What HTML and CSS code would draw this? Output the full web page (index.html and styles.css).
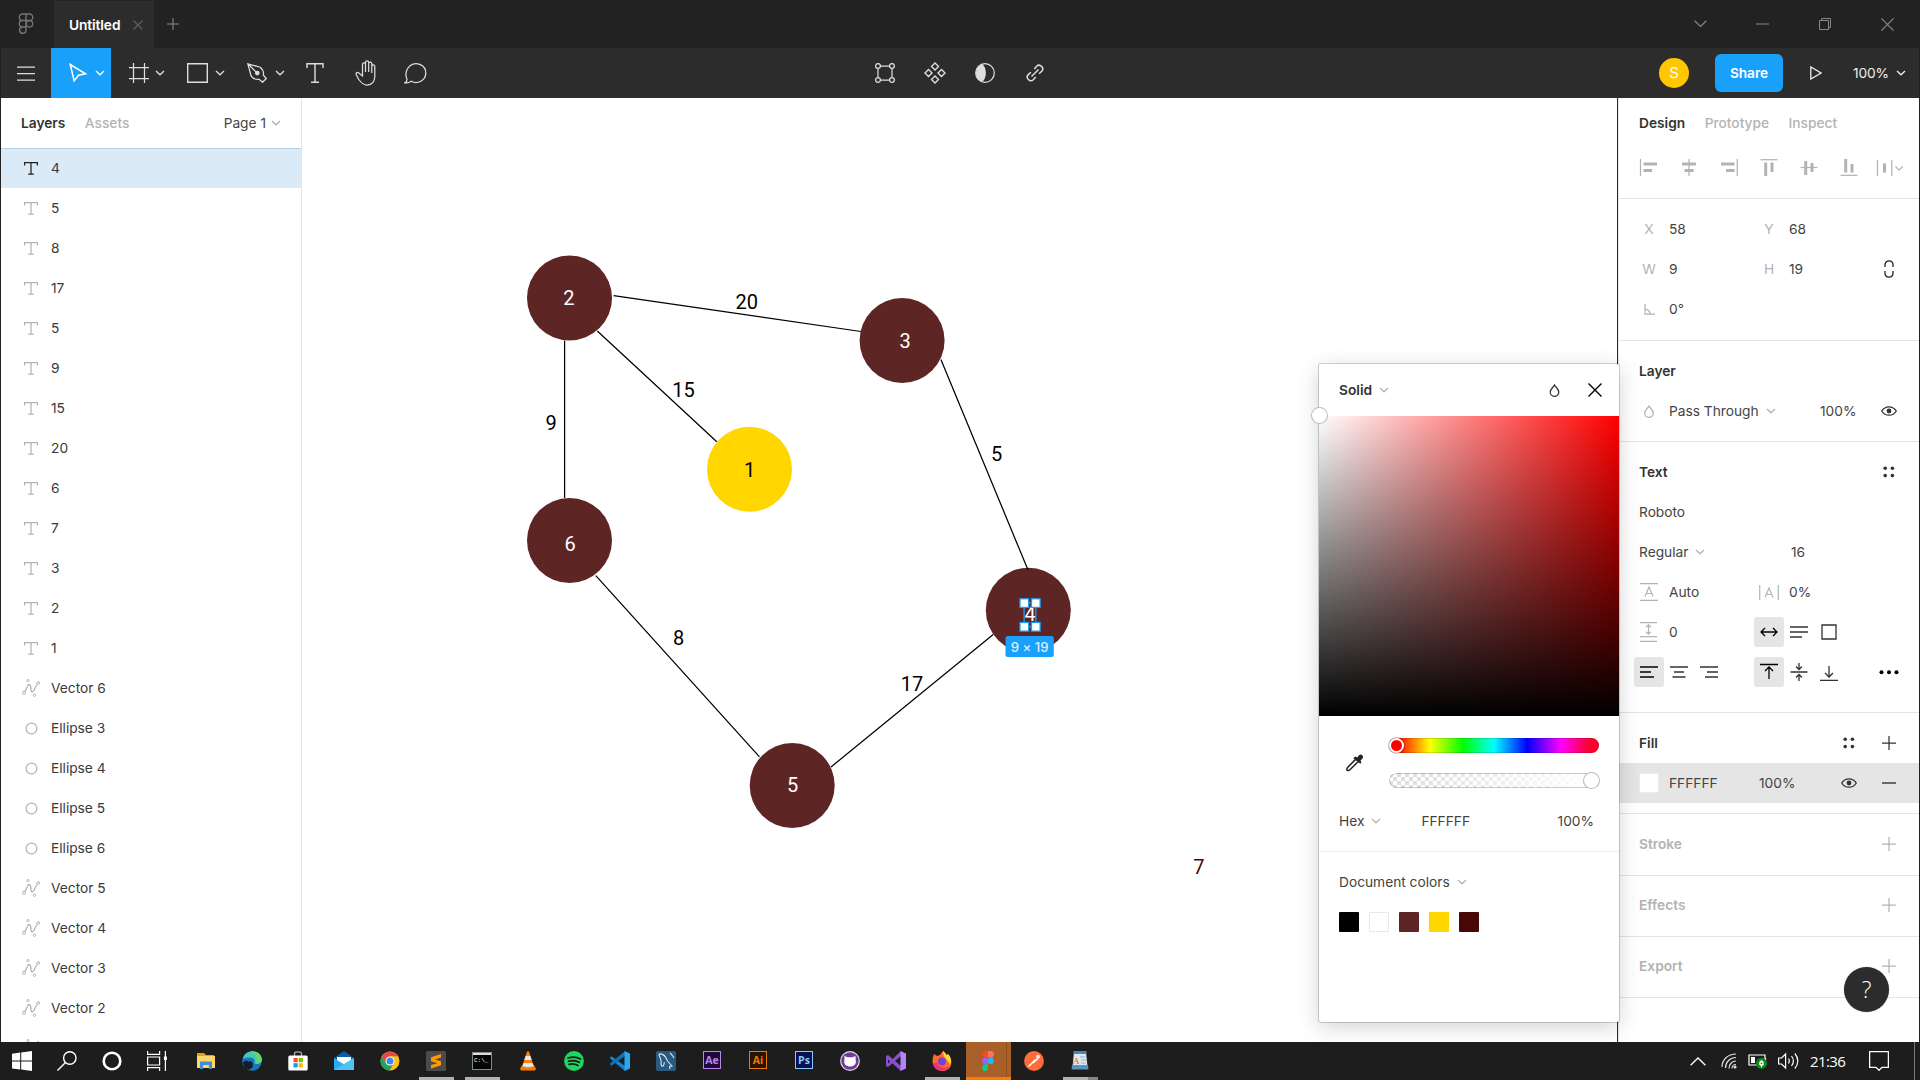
FILE: index.html
```html
<!DOCTYPE html>
<html lang="en">
<head>
<meta charset="utf-8">
<title>Untitled</title>
<link rel="stylesheet" href="styles.css">
</head>
<body>
<svg class="defs" width="0" height="0">
  <symbol id="chev" viewBox="0 0 10 6"><path d="M1 1l4 3.8L9 1" fill="none" stroke="currentColor" stroke-width="1.3"/></symbol>
  <symbol id="plus" viewBox="0 0 14 14"><path d="M7 0v14M0 7h14" stroke="currentColor" stroke-width="1.25"/></symbol>
  <symbol id="dots" viewBox="0 0 12 12"><g fill="currentColor"><circle cx="2.2" cy="2.2" r="1.8"/><circle cx="9.4" cy="2.2" r="1.8"/><circle cx="2.2" cy="9.6" r="1.8"/><circle cx="9.4" cy="9.6" r="1.8"/></g></symbol>
  <symbol id="eye" viewBox="0 0 16 10"><path d="M.7 5C4.2-.6 11.8-.6 15.3 5 11.800 10.600 4.200 10.600.7 5z" fill="none" stroke="currentColor" stroke-width="1.3"/><circle cx="8" cy="5" r="2.4" fill="currentColor"/></symbol>
  <symbol id="drop" viewBox="0 0 10 13"><path d="M5 .9C6.200 3.400 9.300 5 9.300 8.100a4.300 4.300 0 0 1-8.600 0C.7 5 3.800 3.400 5 .9z" fill="none" stroke="currentColor" stroke-width="1.25"/></symbol>
  <symbol id="type" viewBox="0 0 14 13"><path d="M.6 3.400V.7h12.800v2.700M7 .7v11.500M4.200 12.200h5.600" fill="none" stroke="currentColor" stroke-width="1.25"/></symbol>
  <symbol id="oval" viewBox="0 0 13 13"><circle cx="6.500" cy="6.500" r="5.400" fill="none" stroke="currentColor" stroke-width="1.25"/></symbol>
  <symbol id="vector" viewBox="0 0 18 18"><g fill="none" stroke="currentColor" stroke-width="1"><path d="M2.800 12.600C5.500 9 5.500 4.600 7.700 5.600S8 12.800 10 13s3.300-5.600 5-7.400" stroke-width="1.300"/><circle cx="5.800" cy="1.600" r="1.100"/><circle cx="2" cy="13.800" r="1.500"/><circle cx="12.400" cy="16.200" r="1.200"/><circle cx="16.200" cy="4" r="1.400"/></g></symbol>
</svg>

<header class="titlebar">
  <div class="home"><svg width="16" height="22" viewBox="0 0 16 22" fill="none" stroke="#777" stroke-width="1.300"><path d="M8 1H4.500a3.200 3.200 0 0 0 0 6.500H8zM8 1h3.500a3.200 3.200 0 0 1 0 6.500H8zM8 7.500H4.500a3.200 3.200 0 0 0 0 6.500H8zM8 14H4.500A3.200 3.200 0 1 0 8 17.200z"/><circle cx="11.500" cy="10.800" r="3.200"/></svg></div>
  <div class="tab"><span>Untitled</span><svg width="10" height="10" viewBox="0 0 10 10"><path d="M.5.5l9 9M9.500.5l-9 9" stroke="#5c5c5c" stroke-width="1.400"/></svg></div>
  <svg class="newtab" width="12" height="12"><use href="#plus"/></svg>
  <div class="winctl">
    <div><svg width="13" height="8" viewBox="0 0 13 8"><path d="M.6.8l5.900 5.700L12.400.8" fill="none" stroke="#888" stroke-width="1.200"/></svg></div>
    <div><svg width="13" height="2"><path d="M0 1h13" stroke="#888"/></svg></div>
    <div><svg width="12" height="12" viewBox="0 0 12 12" fill="none" stroke="#888"><path d="M.5 2.500h9v9h-9zM2.500 2.500v-2h9v9h-2"/></svg></div>
    <div><svg width="13" height="13" viewBox="0 0 13 13"><path d="M.4.4l12.200 12.200M12.600.4L.4 12.600" stroke="#888" stroke-width="1.200"/></svg></div>
  </div>
</header>

<nav class="toolbar">
  <div class="tools">
    <div class="tool menu"><svg width="18" height="15" viewBox="0 0 18 15"><path d="M0 1h18M0 7.500h18M0 14h18" stroke="currentColor" stroke-width="1.250"/></svg></div>
    <div class="tool wide active"><svg width="18" height="20" viewBox="0 0 18 20"><path d="M1.200 1.500l15.300 9.300-7 1.500-4.300 5.500z" fill="none" stroke="currentColor" stroke-width="1.500"/></svg><svg class="c" width="10" height="6"><use href="#chev"/></svg></div>
    <div class="tool wide frame"><svg width="20" height="20" viewBox="0 0 20 20"><path d="M4.500 0v20M15.500 0v20M0 4.500h20M0 15.500h20" stroke="currentColor" stroke-width="1.250"/></svg><svg class="c" width="10" height="6"><use href="#chev"/></svg></div>
    <div class="tool wide shape"><svg width="21" height="20" viewBox="0 0 21 20"><path d="M.7.7h19.600v18.600H.7z" fill="none" stroke="currentColor" stroke-width="1.400"/></svg><svg class="c" width="10" height="6"><use href="#chev"/></svg></div>
    <div class="tool wide shape"><svg width="20" height="20" viewBox="0 0 20 20" fill="none" stroke="currentColor" stroke-width="1.250"><path d="M.8.8l12.400 3.400c2 1.600 3.600 5 3.200 8l2.900 3.300-3.800 3.800-3.300-2.900c-3.600.2-6.600-1-8-3.200zM.8.8l8.600 8.600"/><circle cx="10.300" cy="10.100" r="1.700" fill="currentColor"/></svg><svg class="c" width="10" height="6"><use href="#chev"/></svg></div>
    <div class="tool single"><svg width="18" height="20" viewBox="0 0 18 20"><path d="M1 5V.8h16V5M9 .8v18.400M5 19.200h8" fill="none" stroke="currentColor" stroke-width="1.400"/></svg></div>
    <div class="tool single"><svg width="24" height="26" viewBox="0 0 24 26"><path d="M7.500 14V4.600c0-2.200 3-2.200 3 0V12 2.500c0-2.200 3.200-2.200 3.200 0V12 3.500c0-2 3.100-2 3.100 0V13 6.300c0-2 3-2 3 0V16.500c0 5-3 8.500-7.500 8.500-4 0-6-2-8.500-5.500L1.400 15c-1.300-2 .9-3.200 2.400-2l3.700 3z" transform="translate(2 0)" fill="none" stroke="currentColor" stroke-width="1.250"/></svg></div>
    <div class="tool single"><svg width="23" height="22" viewBox="0 0 23 22"><path d="M.8 20.800c1.500-.8 2.300-2.300 2.200-3.700C.8 12.400 2.200 6.800 6 3.700 12.300-1 21.800 3 21.800 11c0 7.500-8.500 11.800-14.500 8.300-1.700 1.200-4 1.900-6.500 1.500z" fill="none" stroke="currentColor" stroke-width="1.250"/></svg></div>
  </div>
  <div class="mid">
    <div class="tool"><svg width="20" height="20" viewBox="0 0 20 20" fill="none" stroke="currentColor" stroke-width="1.250"><circle cx="3" cy="3" r="2.400"/><circle cx="17" cy="3" r="2.400"/><circle cx="3" cy="17" r="2.400"/><circle cx="17" cy="17" r="2.400"/><path d="M5.400 3h9.200M5.400 17h9.200M3 5.400v9.200M17 5.400v9.200"/></svg></div>
    <div class="tool"><svg width="22" height="22" viewBox="0 0 22 22" fill="none" stroke="currentColor" stroke-width="1.400"><path d="M11 1l3.500 3.500L11 8 7.500 4.500zM11 14l3.500 3.500L11 21l-3.500-3.500zM4.500 7.500L8 11l-3.500 3.500L1 11zM17.500 7.500L21 11l-3.500 3.500L14 11z"/></svg></div>
    <div class="tool"><svg width="20" height="20" viewBox="0 0 20 20"><circle cx="10" cy="10" r="9.300" fill="none" stroke="currentColor" stroke-width="1.250"/><path d="M7.500 1.200a9.200 9.200 0 0 0 0 17.600c4.500-4 4.500-13.600 0-17.600z" fill="currentColor"/></svg></div>
    <div class="tool"><svg width="18" height="18" viewBox="0 0 18 18" fill="none" stroke="currentColor" stroke-width="1.500"><path d="M5.500 12.500l7-7M8.300 4.900l2.300-2.600c3.200-3.200 8.200 1.700 5.100 5l-2.600 2.400M4.900 8.300L2.300 10.600c-3.200 3.200 1.700 8.200 5 5.100l2.400-2.600"/></svg></div>
  </div>
  <div class="actions">
    <div class="avatar">S</div>
    <div class="share">Share</div>
    <svg class="play" width="12" height="14" viewBox="0 0 12 14"><path d="M.8 1v12l10.200-6z" fill="none" stroke="currentColor" stroke-width="1.300"/></svg>
    <span class="zoom">100%</span>
    <svg width="10" height="6"><use href="#chev"/></svg>
  </div>
</nav>

<main class="workspace">
  <aside class="layers">
    <div class="lhead"><b>Layers</b><span class="dim">Assets</span><span class="page">Page 1 <svg width="10" height="6"><use href="#chev"/></svg></span></div>
    <ul>
      <li class="sel"><svg width="14" height="13"><use href="#type"/></svg>4</li>
      <li><svg width="14" height="13"><use href="#type"/></svg>5</li>
      <li><svg width="14" height="13"><use href="#type"/></svg>8</li>
      <li><svg width="14" height="13"><use href="#type"/></svg>17</li>
      <li><svg width="14" height="13"><use href="#type"/></svg>5</li>
      <li><svg width="14" height="13"><use href="#type"/></svg>9</li>
      <li><svg width="14" height="13"><use href="#type"/></svg>15</li>
      <li><svg width="14" height="13"><use href="#type"/></svg>20</li>
      <li><svg width="14" height="13"><use href="#type"/></svg>6</li>
      <li><svg width="14" height="13"><use href="#type"/></svg>7</li>
      <li><svg width="14" height="13"><use href="#type"/></svg>3</li>
      <li><svg width="14" height="13"><use href="#type"/></svg>2</li>
      <li><svg width="14" height="13"><use href="#type"/></svg>1</li>
      <li><svg width="18" height="18"><use href="#vector"/></svg>Vector 6</li>
      <li><svg width="13" height="13"><use href="#oval"/></svg>Ellipse 3</li>
      <li><svg width="13" height="13"><use href="#oval"/></svg>Ellipse 4</li>
      <li><svg width="13" height="13"><use href="#oval"/></svg>Ellipse 5</li>
      <li><svg width="13" height="13"><use href="#oval"/></svg>Ellipse 6</li>
      <li><svg width="18" height="18"><use href="#vector"/></svg>Vector 5</li>
      <li><svg width="18" height="18"><use href="#vector"/></svg>Vector 4</li>
      <li><svg width="18" height="18"><use href="#vector"/></svg>Vector 3</li>
      <li><svg width="18" height="18"><use href="#vector"/></svg>Vector 2</li>
      <li><svg width="18" height="18"><use href="#vector"/></svg></li>
    </ul>
  </aside>

  <section class="canvas">
    <svg width="1315" height="944" viewBox="302 98 1315 944">
      <g fill="#5e2525">
        <circle cx="569.500" cy="298" r="42.500"/><circle cx="902.100" cy="340.500" r="42.500"/>
        <circle cx="569.500" cy="540.400" r="42.500"/><circle cx="1028.300" cy="610.300" r="42.500"/>
        <circle cx="792.200" cy="785.500" r="42.500"/><circle cx="749.500" cy="469.300" r="42.500" fill="#ffd600"/>
      </g>
      <path d="M613.600 295.700L861 331.500M597.300 331L716.800 441.700M564.600 340.600V498M940.900 359.400L1028 570M595.800 575.600L759.500 756.800M993.200 634.500L831 767" fill="none" stroke="#000" stroke-width="1.250"/>
      <g class="lbl">
        <text x="746.700" y="308.600">20</text><text x="683.500" y="396.600">15</text><text x="551" y="429.600">9</text>
        <text x="996.600" y="460.600">5</text><text x="678.700" y="644.600">8</text><text x="912" y="690.600">17</text>
        <text x="749.500" y="476.600">1</text><text x="1198.800" y="874">7</text>
      </g>
      <g class="lbl" fill="#fff">
        <text x="568.800" y="304.800">2</text><text x="905" y="348.200">3</text><text x="570" y="550.600">6</text>
        <text x="792.600" y="791.800">5</text><text x="1030" y="620.500">4</text>
      </g>
      <g fill="none" stroke="#18a0fb" stroke-width="1.250">
        <rect x="1024.100" y="602.800" width="11.800" height="24"/>
        <g fill="#fff"><rect x="1020" y="598.800" width="8.600" height="8.600"/><rect x="1031.500" y="598.800" width="8.600" height="8.600"/><rect x="1020" y="622.500" width="8.600" height="8.600"/><rect x="1031.500" y="622.500" width="8.600" height="8.600"/></g>
      </g>
      <rect x="1005.500" y="636" width="48.300" height="21" rx="2.500" fill="#18a0fb"/>
      <text class="dims" x="1029.700" y="651.500">9 × 19</text>
    </svg>
  </section>

  <aside class="props">
    <div class="sec top">
      <div class="tabs"><b>Design</b><span>Prototype</span><span>Inspect</span></div>
      <div class="aligns">
        <svg width="18" height="17" viewBox="0 0 18 17"><path d="M1.500 0v17" stroke-width="1.250"/><path d="M4.500 5H18M4.500 11.500h8.500" stroke-width="3"/></svg>
        <svg width="18" height="17" viewBox="0 0 18 17"><path d="M10 0v17" stroke-width="1.250"/><path d="M3 5h14M5.500 11.500h9" stroke-width="3"/></svg>
        <svg width="19" height="17" viewBox="0 0 19 17"><path d="M18.300 0v17" stroke-width="1.250"/><path d="M2 5h13.500M7 11.500h8.500" stroke-width="3"/></svg>
        <svg width="18" height="17" viewBox="0 0 18 17"><path d="M.5.7h17" stroke-width="1.250"/><path d="M5.700 3.500v13.500M12 3.500v9.500" stroke-width="3"/></svg>
        <svg width="18" height="17" viewBox="0 0 18 17"><path d="M.5 8.500h17" stroke-width="1.250"/><path d="M5.700 2v14M12 4v9" stroke-width="3"/></svg>
        <svg width="18" height="17" viewBox="0 0 18 17"><path d="M.5 16.300h17" stroke-width="1.250"/><path d="M5.700 0v13.500M12 5v8.500" stroke-width="3"/></svg>
        <svg class="dist" width="28" height="17" viewBox="0 0 28 17"><path d="M1.500 1v16M15.800 1v16M19.500 7.500l3.600 3.600 3.600-3.600" fill="none" stroke-width="1.250"/><path d="M8.500 4.500v9" stroke-width="3"/></svg>
      </div>
    </div>
    <div class="sec geo">
      <div class="row"><i>X</i><span>58</span><i>Y</i><span>68</span></div>
      <div class="row"><i>W</i><span>9</span><i>H</i><span>19</span><em><svg width="10" height="18" viewBox="0 0 10 18"><path d="M1 7V5c0-5.500 8-5.500 8 0v2M1 11v2c0 5.500 8 5.500 8 0v-2" fill="none" stroke="#222" stroke-width="1.300"/></svg></em></div>
      <div class="row"><i><svg width="11" height="11" viewBox="0 0 11 11"><path d="M1 0v10h10M1 5a5 5 0 0 1 5 5" fill="none" stroke="currentColor" stroke-width="1.250"/></svg></i><span>0°</span></div>
    </div>
    <div class="sec">
      <div class="row title"><b>Layer</b></div>
      <div class="row blend"><i><svg width="10" height="13"><use href="#drop"/></svg></i><span>Pass Through <svg width="10" height="6"><use href="#chev"/></svg></span><span>100%</span><em><svg width="16" height="10"><use href="#eye"/></svg></em></div>
    </div>
    <div class="sec text">
      <div class="row title"><b>Text</b><em><svg width="12" height="12"><use href="#dots"/></svg></em></div>
      <div class="row title"><span>Roboto</span></div>
      <div class="row style"><span>Regular <svg width="10" height="6"><use href="#chev"/></svg></span><span>16</span></div>
      <div class="row"><i><svg width="18" height="18" viewBox="0 0 18 18"><path d="M0 .7h18M0 17.300h18M5 13.500L9 4l4 9.500M6.300 10.500h5.400" fill="none" stroke="currentColor" stroke-width="1.200"/></svg></i><span>Auto</span><i><svg width="20" height="15" viewBox="0 0 20 15"><path d="M.7 0v15M19.300 0v15M6 12.500L10 3l4 9.500M7.300 9.500h5.400" fill="none" stroke="currentColor" stroke-width="1.200"/></svg></i><span>0%</span></div>
      <div class="row btns"><i><svg width="18" height="20" viewBox="0 0 18 20"><path d="M0 .7h17M0 14.700h17M0 19.300h17M8.500 3v9M6 5.200l2.500-2.400L11 5.200M6 9.800l2.500 2.400L11 9.800" fill="none" stroke="currentColor" stroke-width="1.200"/></svg></i><span>0</span>
        <div class="set"><u class="on"><svg width="18" height="10" viewBox="0 0 18 10"><path d="M1 5h16M5 1L1 5l4 4M13 1l4 4-4 4"/></svg></u><u><svg width="18" height="12" viewBox="0 0 18 12"><path d="M0 1h18M0 6h18M0 11h12"/></svg></u><u><svg width="16" height="16" viewBox="0 0 16 16"><path d="M1 1h14v14H1z"/></svg></u></div></div>
      <div class="row btns"><div class="set"><u class="on"><svg width="18" height="12" viewBox="0 0 18 12"><path d="M0 1h18M0 6h11M0 11h14"/></svg></u><u><svg width="18" height="12" viewBox="0 0 18 12"><path d="M0 1h18M4 6h10M2.500 11h13"/></svg></u><u><svg width="18" height="12" viewBox="0 0 18 12"><path d="M0 1h18M7 6h11M5 11h13"/></svg></u></div>
        <div class="set"><u class="on"><svg width="18" height="18" viewBox="0 0 18 18"><path d="M0 1.500h18M9 16V4.500M5 8l4-4 4 4"/></svg></u><u><svg width="18" height="18" viewBox="0 0 18 18"><path d="M.5 9h17M9 0v6M6 3.500l3 3 3-3M9 18v-6M6 14.500l3-3 3 3"/></svg></u><u><svg width="18" height="18" viewBox="0 0 18 18"><path d="M0 17.300h18M9 3v11M5 10l4 4 4-4"/></svg></u></div>
        <em><svg width="20" height="5" viewBox="0 0 20 5"><circle cx="2.500" cy="2.300" r="2"/><circle cx="10" cy="2.300" r="2"/><circle cx="17.500" cy="2.300" r="2"/></svg></em></div>
    </div>
    <div class="sec fill">
      <div class="row title"><b>Fill</b><em><svg width="12" height="12"><use href="#dots"/></svg></em><em><svg width="14" height="14"><use href="#plus"/></svg></em></div>
      <div class="row paint"><i><s></s></i><span>FFFFFF</span><span>100%</span><em><svg width="16" height="10"><use href="#eye"/></svg></em><em><svg width="14" height="2"><path d="M0 1h14" stroke="#333" stroke-width="1.400"/></svg></em></div>
    </div>
    <div class="sec off stroke"><div class="row title"><b>Stroke</b><em><svg width="14" height="14"><use href="#plus"/></svg></em></div></div>
    <div class="sec off"><div class="row title"><b>Effects</b><em><svg width="14" height="14"><use href="#plus"/></svg></em></div></div>
    <div class="sec off"><div class="row title"><b>Export</b><em><svg width="14" height="14"><use href="#plus"/></svg></em></div></div>
  </aside>
</main>

<section class="picker">
  <div class="phead"><b>Solid</b><svg class="gray" width="10" height="6"><use href="#chev"/></svg><svg class="pdrop" width="11" height="13"><use href="#drop"/></svg><svg width="14" height="14" viewBox="0 0 14 14"><path d="M.5.5l13 13M13.500.5l-13 13" stroke="#000" stroke-width="1.400"/></svg></div>
  <div class="sv"><div class="knob"></div></div>
  <div class="sliders">
    <svg width="18" height="18" viewBox="0 0 18 18"><path d="M9.600 5.400L2 13c-1.200 1.200-1.300 2-1 3.200 1 .7 2.200.3 3.200-.7l7.800-7.800" fill="none" stroke="#222" stroke-width="1.500"/><path d="M8 3.600l1.600-1 1.600 1 1.600-2.100c2-2.600 5.800 1 3.500 3.300L14.500 6.600l1 1.800-1.300 1.300-6.900-5.400z" fill="#222"/></svg>
    <div class="bars"><div class="hue"><div class="ring"></div></div><div class="alpha"><div class="dot"></div></div></div>
  </div>
  <div class="hex"><span>Hex</span><svg class="gray" width="10" height="6"><use href="#chev"/></svg><span class="val">FFFFFF</span><span>100%</span></div>
  <div class="doc"><div class="doch"><span>Document colors</span><svg class="gray" width="10" height="6"><use href="#chev"/></svg></div>
    <div class="swatches"><div class="k"></div><div class="w"></div><div class="m"></div><div class="y"></div><div class="d"></div></div></div>
</section>
<div class="help">?</div>

<footer class="taskbar">
  <div class="sys"><svg width="20" height="20" viewBox="0 0 20 20"><path d="M0 2.800l8.200-1.200v8H0zM9.200 1.500L20 0v9.600H9.200zM0 10.500h8.200v8L0 17.400zM9.200 10.500H20V20L9.200 18.500z" fill="#fff"/></svg></div>
  <div class="sys"><svg width="20" height="20" viewBox="0 0 20 20" fill="none" stroke="#fff" stroke-width="1.400"><circle cx="12.800" cy="7" r="6.200"/><path d="M8.500 11.500L.5 19.500"/></svg></div>
  <div class="sys"><svg width="20" height="20" viewBox="0 0 20 20"><circle cx="10" cy="10" r="8.300" fill="none" stroke="#fff" stroke-width="2.600"/></svg></div>
  <div class="sys last"><svg width="20" height="20" viewBox="0 0 20 20" fill="none" stroke="#fff" stroke-width="1.200"><path d="M.6 0v3.400h12V0M.6 20v-3.400h12V20M.6 6h12v8H.6zM18.400 0v20"/><path d="M18.400 5.500v3.500" stroke-width="3"/></svg></div>
  <div class="app"><svg width="20" height="20" viewBox="0 0 20 20"><path d="M1 2h7l2 2h8v3H1z" fill="#e0a21a"/><path d="M1 5h18v12H1z" fill="#ffd667"/><path d="M4 18v-7.500h12V18h-3v-4H7v4z" fill="#3f8fd6"/></svg></div>
  <div class="app"><svg width="20" height="20" viewBox="0 0 20 20"><circle cx="10" cy="10" r="9.800" fill="#1576c4"/><path d="M1 8C2 2 7 0 11 .2c6 .2 9.500 5.300 8.600 9.500-.7 3.300-5 4-7.400 2.500C14 9 11 6.500 7.500 6.500 4.500 6.500 2 7 1 8z" fill="#45c8b1"/><path d="M12 .4c5 1 8.300 4.600 7.700 9-.6 3-4.500 3.800-6.500 2.800C16 9 15 3 9 .5z" fill="#65d76c"/><path d="M.8 11.500L4 9.500l2.500 1L9 10l2 2.500-.5 4L7 18.700 3 17.500z" fill="#171d25"/></svg></div>
  <div class="app"><svg width="20" height="20" viewBox="0 0 20 20"><path d="M6.500 5V2.500c0-2.300 7-2.300 7 0V5" fill="none" stroke="#aaa" stroke-width="1.300"/><rect x=".3" y="4.500" width="19.400" height="15" rx="1.500" fill="#fff"/><path d="M5.500 7h4.200v4.200H5.500z" fill="#f25022"/><path d="M10.700 7h4.200v4.200h-4.200z" fill="#7fba00"/><path d="M5.500 12.200h4.200v4.200H5.500z" fill="#00a4ef"/><path d="M10.700 12.200h4.200v4.200h-4.200z" fill="#ffb900"/></svg></div>
  <div class="app"><svg width="20" height="20" viewBox="0 0 20 20"><path d="M0 7l10-7 10 7v4H0z" fill="#0d5cab"/><path d="M3 6h14v6l-7 3-7-3z" fill="#fff"/><path d="M0 7l10 6.500L20 7v12H0z" fill="#2aa9ee"/><path d="M0 19L20 7v12z" fill="#4cc4f8"/></svg></div>
  <div class="app"><svg width="20" height="20" viewBox="0 0 20 20"><circle cx="10" cy="10" r="9.500" fill="#fbc116"/><path d="M1.700 5.300A9.500 9.500 0 0 1 18.300 5.300H10L6 12.400z" fill="#e04a3f"/><path d="M1.700 5.300A9.500 9.500 0 0 0 9.500 19.500l4.400-7.200L6 12.400z" fill="#1ea362"/><circle cx="10" cy="10" r="4.500" fill="#fff"/><circle cx="10" cy="10" r="3.500" fill="#4285f4"/></svg></div>
  <div class="app run"><svg width="20" height="20" viewBox="0 0 20 20"><rect width="20" height="20" rx="1.500" fill="#4b4b4b"/><path d="M15 3L5 6.200v4l6.500 2L5 14v3.500l10-3.200v-4L8.700 8.500 15 6.600z" fill="#ff9800"/></svg></div>
  <div class="app run"><svg width="20" height="18" viewBox="0 0 20 18"><rect x=".5" y=".5" width="19" height="17" fill="#050505" stroke="#888"/><path d="M1 1h18v2H1z" fill="#ddd"/><text x="2" y="10" class="cmd">C:\_</text></svg></div>
  <div class="app"><svg width="20" height="20" viewBox="0 0 20 20"><path d="M4 14h12l2 4-1 1.500H3L2 18z" fill="#f57c00"/><path d="M9 .5h2L16 16c-3 2-9 2-12 0z" fill="#f58212"/><path d="M7.600 5h4.800l1.300 4H6.300zM5.400 12h9.200l1 3c-3 1.500-8 1.500-11 0z" fill="#e8e8e8"/></svg></div>
  <div class="app"><svg width="20" height="20" viewBox="0 0 20 20"><circle cx="10" cy="10" r="9.900" fill="#1ed760"/><path d="M4 7c4-1.300 9-1 12.500 1M4.500 10.300c3.500-1 7.500-.7 10.800 1M5 13.400c3-.8 6-.5 9 1" fill="none" stroke="#151515" stroke-width="1.700" stroke-linecap="round"/></svg></div>
  <div class="app"><svg width="20" height="20" viewBox="0 0 20 20"><path d="M0 6.500l1.500-1.300L15 15v5L0 7.500z" fill="#1482cc"/><path d="M0 13.500l1.500 1.300L15 5V0L0 12.500z" fill="#0d70b8"/><path d="M14.500 0L20 2.500v15L14.500 20z" fill="#2ba5f2"/></svg></div>
  <div class="app"><svg width="20" height="20" viewBox="0 0 20 20"><rect width="20" height="20" rx="2" fill="#285a82"/><path d="M3 3c5-1 7 3 8.500 7l4.500 5-2.500.3L14 18M3 3c0 3 2 4 2 7s0 6 2 5 0-4 2-3M14 2l2 2 2 3" fill="none" stroke="#d8e8f0" stroke-width="1.100"/></svg></div>
  <div class="app"><div class="adobe ae">Ae</div></div>
  <div class="app"><div class="adobe ai">Ai</div></div>
  <div class="app"><div class="adobe ps">Ps</div></div>
  <div class="app"><svg width="20" height="20" viewBox="0 0 20 20"><circle cx="10" cy="10" r="9.300" fill="#74379b" stroke="#ddd" stroke-width="1.200"/><path d="M4.500 5l3 1.200h5l3-1.200.2 4c1 4-1.500 6.500-5.700 6.500S3.500 13 4.400 9z" fill="#fff"/></svg></div>
  <div class="app"><svg width="20" height="20" viewBox="0 0 20 20"><path d="M0 5l2-1L15 15v5L2 8.500v4L15 0v5L2 16l-2-1z" fill="#8a4fd0"/><path d="M14.500 0L20 2.500v15L14.500 20z" fill="#b583f4"/></svg></div>
  <div class="app run"><svg width="20" height="20" viewBox="0 0 20 20"><path d="M2 3l3 2 3-1 3-4c3 2 3 4 4 4l1-1c3 3 4 7 3 11-1 4-5 6-9 6-5 0-9-4-9.500-9C.5 8 1 5 2 3z" fill="#ff6a2b"/><path d="M11 0c3 2 3 4 4 4l1-1c3 3 4 7 2 11-2-6-7-6-7-14z" fill="#ffd83a"/><path d="M1 13c2 8 13 9 17 2-5 3-12 2-13-4z" fill="#f0307a"/><circle cx="10" cy="10.500" r="4" fill="#7a40d0"/></svg></div>
  <div class="app current"><svg width="12" height="20" viewBox="0 0 14 20" preserveAspectRatio="none"><path d="M7 0H3.500a3.300 3.300 0 0 0 0 6.600H7z" fill="#f24e1e"/><path d="M7 0h3.500a3.300 3.300 0 0 1 0 6.600H7z" fill="#ff7262"/><path d="M7 6.600H3.500a3.300 3.300 0 0 0 0 6.600H7z" fill="#a259ff"/><circle cx="10.300" cy="9.900" r="3.300" fill="#1abcfe"/><path d="M7 13.200H3.500A3.400 3.400 0 1 0 7 16.600z" fill="#0acf83"/></svg></div>
  <div class="app"><svg width="20" height="20" viewBox="0 0 20 20"><circle cx="10" cy="10" r="9.900" fill="#ff6c37"/><path d="M4.500 15.500l7-7M9 12l5-4.500" stroke="#fff" stroke-width="1.500"/><circle cx="14" cy="5.800" r="2" fill="#fde"/></svg></div>
  <div class="app run pair"><svg width="18" height="20" viewBox="0 0 18 20"><path d="M3 1h12l1.500 15h-15z" fill="#dce9f5"/><path d="M2.500 0h13v3h-13z" fill="#4a85b8"/><path d="M1 14h16l.5 4.500H.5z" fill="#5c93bf"/><path d="M9 6h5M10 9h5M10 12h5" stroke="#8fb0cc"/><text x="2" y="12.500" class="wp">A</text></svg></div>
  <div class="tray">
    <svg width="16" height="9" viewBox="0 0 16 9"><path d="M.6 8.300L8 1l7.400 7.300" fill="none" stroke="#fff" stroke-width="1.300"/></svg>
    <svg class="wifi" width="16" height="16" viewBox="0 0 16 16" fill="none" stroke="#ddd" stroke-width="1.200"><path d="M1 14C1 6.500 7 1 15 1M4.500 15C4.500 9 9 4.500 15 4.500M8 15.500c0-4 3-7.500 7-7.500M11 15.500c0-2 1.500-4 4-4"/><circle cx="14" cy="14" r="1" fill="#fff"/></svg>
    <svg class="bat" width="20" height="16" viewBox="0 0 20 16"><path d="M1 2h16v10H1zM17.500 5v4" fill="none" stroke="#fff" stroke-width="1.200"/><path d="M3 4h4v6H3z" fill="#fff"/><circle cx="13.500" cy="10.300" r="5.500" fill="#0b8a17"/><path d="M13.500 7l2.200 2v3l-1.700 1v1.500h-1V13l-1.700-1V9z" fill="#fff"/><circle cx="13.500" cy="10.300" r=".9" fill="#0b8a17"/></svg>
    <svg class="vol" width="21" height="18" viewBox="0 0 21 18" fill="none" stroke="#fff" stroke-width="1.200"><path d="M.6 6h3l4-4v14l-4-4h-3zM10.500 6.500c1 1.500 1 3.500 0 5M13.500 4c2.300 3 2.300 7 0 10M16.800 1.500c4 4.500 4 10.500 0 15"/></svg>
    <time>21:36</time>
    <svg class="note" width="20" height="20" viewBox="0 0 20 20"><path d="M.6.700h18.800v15.700H13L10 19.300 7 16.400H.6z" fill="none" stroke="#fff" stroke-width="1.300"/></svg>
  </div>
</footer>
</body>
</html>
```
FILE: styles.css
```css
* { box-sizing: border-box; }
body { margin: 0; width: 1920px; height: 1080px; overflow: hidden; display: grid; grid-template-rows: 48px 50px 944px 38px; background: #222; color: #333; font: 13.75px/20px Inter, "Liberation Sans", sans-serif; letter-spacing: -.01px; }
svg { display: block; flex: none; }
.defs { position: absolute; }
b { font-weight: 600; }
i, em { font-style: normal; }
u, s { text-decoration: none; }

.titlebar { display: flex; align-items: center; background: #222; }
.home { width: 54px; padding-left: 18px; }
.tab { width: 100px; height: 47px; align-self: flex-end; display: flex; align-items: center; justify-content: space-between; padding: 0 11px 0 15px; background: #2c2c2c; color: #fff; font-weight: 600; letter-spacing: -.1px; }
.newtab { margin-left: 12.500px; color: #888; }
.winctl { display: flex; margin-left: auto; }
.winctl div { width: 62.500px; display: flex; align-items: center; justify-content: center; }
.winctl div:last-child { margin-right: 1px; }

.toolbar { display: grid; grid-template-columns: 1fr auto 1fr; background: #2c2c2c; border: solid #222; border-width: 0 1px; color: #ddd; }
.tools, .mid { display: flex; }
.tool { width: 50px; height: 50px; display: flex; align-items: center; justify-content: center; }
.tool.wide { width: 60px; justify-content: flex-start; padding-left: 18px; }
.tool.shape { padding-left: 16px; }
.tool.single { padding-right: 2px; }
.tool.wide .c { margin-left: auto; margin-right: 6px; }
.tool.active { background: #18a0fb; color: #fff; }
.actions { display: flex; align-items: center; justify-content: flex-end; padding-right: 13px; color: #eee; }
.avatar { width: 30px; height: 30px; border-radius: 50%; background: #ffc700; color: #fff; text-align: center; line-height: 30px; font-size: 15px; margin-right: 26px; }
.share { width: 68px; height: 38px; line-height: 38px; border-radius: 6px; background: #18a0fb; color: #fff; text-align: center; font-weight: 600; margin-right: 27px; letter-spacing: -.1px; }
.zoom { margin: 0 7px 0 31px; letter-spacing: -.1px; }

.workspace { display: grid; grid-template-columns: 301px 1fr 302px; border: solid #222; border-width: 0 1px; background: #fff; overflow: hidden; height: 944px; }
.layers { border-right: 1px solid #e5e5e5; overflow: hidden; height: 944px; }
.lhead { height: 50px; display: flex; align-items: center; padding: 0 20px; }
.dim { color: #b3b3b3; font-weight: 500; margin-left: 19.500px; }
.page { margin-left: auto; display: flex; align-items: center; gap: 5px; color: #444; }
.page svg, .gray, .row span svg { color: #b3b3b3; }
.layers ul { list-style: none; margin: 0; padding: 0; }
.layers li { height: 40px; display: grid; grid-template-columns: 20px 1fr; column-gap: 10px; align-items: center; justify-items: start; padding-left: 20px; color: #3a3a3a; }
.layers li svg { justify-self: center; color: #b3b3b3; }
.layers .sel { background: #daebf7; box-shadow: inset 0 1px #bcd0df; }
.layers .sel svg { color: #222; }

.canvas { overflow: hidden; }
.lbl text { font: 20px Roboto, sans-serif; letter-spacing: 0; text-anchor: middle; }
.lbl text:last-child:nth-child(8) { fill: #490707; }
.dims { font: 500 13.200px Inter, sans-serif; fill: #fff; fill-opacity: .85; text-anchor: middle; }

.props { border-left: 1px solid #2c2c2c; box-shadow: inset 1px 0 #e5e5e5; padding-left: 1px; }
.sec { border-bottom: 1px solid #e5e5e5; padding: 10px 0; }
.top { padding: 0 0 12px; }
.tabs { height: 50px; display: flex; align-items: center; gap: 19.500px; padding-left: 20px; }
.tabs span { color: #b3b3b3; font-weight: 500; }
.aligns { height: 38px; display: flex; align-items: center; gap: 22px; padding-left: 20px; stroke: #b3b3b3; }
.aligns .dist { margin-left: -4px; }
.geo { padding-bottom: 11px; }
.row { height: 40px; display: grid; grid-template-columns: 40px 80px 40px 80px 40px; align-items: center; padding-left: 10px; color: #333; }
.row i, .row em { display: flex; justify-content: center; }
.geo em, .text em { padding-right: 1px; }
.row i { color: #b3b3b3; }
.row span { display: flex; align-items: center; gap: 7px; white-space: nowrap; color: #444; }
.row.title { grid-template-columns: 1fr; grid-auto-flow: column; grid-auto-columns: 40px; padding: 0 10px 0 20px; }
.row.blend { grid-template-columns: 40px 151px 49px 40px; }
.row.style { grid-template-columns: 152px 1fr; padding-left: 20px; }
.text { padding-bottom: 20px; }
.set { display: flex; padding-left: 5px; grid-column: span 2; }
.set u { width: 30px; height: 30px; border-radius: 3px; display: flex; align-items: center; justify-content: center; fill: none; stroke: #333; stroke-width: 1.300px; }
.set .on { background: #e5e5e5; stroke: #000; }
.row.paint { background: #e5e5e5; grid-template-columns: 40px 90px 70px 40px 40px; }
.paint s { width: 20px; height: 20px; background: #fff; border: 1px solid #ececec; border-radius: 1px; }
.off { padding: 9px 0 11px; color: #b3b3b3; }
.off .row { color: #b3b3b3; }
.stroke { padding: 10px 0 11px; }

.picker { position: absolute; left: 1319px; top: 364px; width: 300px; height: 658px; background: #fff; border-radius: 2px; box-shadow: 0 0 0 1px rgba(0,0,0,.17), 0 5px 22px rgba(0,0,0,.18); color: #444; }
.phead { height: 52px; display: flex; align-items: center; padding: 0 17.500px 0 20px; color: #333; }
.phead .gray { margin-left: 7px; }
.pdrop { margin: 0 28px 0 auto; }
.sv { height: 300px; position: relative; background: linear-gradient(to top, #000, transparent), linear-gradient(to right, #fff, #f00); }
.knob { position: absolute; left: -7.500px; top: -8.500px; width: 15px; height: 15px; border-radius: 50%; background: #fff; box-shadow: 0 0 0 1px #bbb; }
.sliders { height: 85px; padding: 22px 20px 0 27px; display: flex; justify-content: space-between; }
.sliders > svg { margin-top: 16px; }
.bars { width: 210px; display: grid; grid-template-rows: 15px 15px; gap: 20px; }
.hue, .alpha { border-radius: 8px; position: relative; }
.hue { background: linear-gradient(90deg, #f00 8px, #ff0 41px, #0f0 74px, #0ff 105px, #00f 138px, #f0f 172px, #ff0030 200px); box-shadow: inset 0 0 0 1px rgba(0,0,0,.12); }
.ring { position: absolute; left: 0; top: 0; width: 15px; height: 15px; border-radius: 50%; background: #f00; border: 2px solid #fff; box-shadow: 0 0 0 1px rgba(0,0,0,.25); }
.alpha { background: linear-gradient(90deg, transparent, #fff), repeating-conic-gradient(#fff 0 25%, #dcdcdc 0 50%) 0 0/8px 8px; box-shadow: inset 0 0 0 1px rgba(0,0,0,.2); }
.dot { position: absolute; right: 0; top: 0; width: 15px; height: 15px; border-radius: 50%; background: #fff; box-shadow: 0 0 0 1px #bbb; }
.hex { height: 51px; padding: 0 25px 11px 20px; display: flex; align-items: center; border-bottom: 1px solid #ececec; }
.hex .gray { margin: 0 40px 0 7px; }
.hex .val { margin-right: auto; }
.doc { padding: 20px 20px 0; }
.doch { display: flex; align-items: center; gap: 7px; }
.swatches { display: flex; gap: 10px; margin-top: 20px; }
.swatches div { width: 20px; height: 20px; border-radius: 1px; }
.k { background: #000; } .w { border: 1px solid #e8e8e8; } .m { background: #5e2525; } .y { background: #ffd600; } .d { background: #490707; }
.help { position: absolute; left: 1844px; top: 967px; width: 45px; height: 45px; border-radius: 50%; background: #2c2c2c; color: #fff; text-align: center; font: 300 23px/45px "Open Sans", sans-serif; box-shadow: 0 0 1px #888; }

.taskbar { display: flex; background: #1d1d1d; height: 38px; }
.sys, .app { height: 38px; display: flex; align-items: center; justify-content: center; flex: none; }
.sys { width: 45px; padding-right: 1.500px; }
.sys.last { margin-right: 3px; }
.app { width: 46px; }
.run { background: linear-gradient(#b5b2ac, #b5b2ac) 50% 100%/35px 3px no-repeat; }
.pair { background: linear-gradient(90deg, #b5b2ac 25px, #858585 25px) 50% 100%/35px 3px no-repeat; }
.current { width: 45px; margin-left: 1px; background: linear-gradient(90deg, transparent 40px, #8f5020 40px 41px, transparent 41px), #a85f28; border-bottom: 3px solid #ff7800; padding: 3px 2px 0 0; }
.adobe { width: 18px; height: 18px; border: 1px solid; font: 700 10.500px/16px "Open Sans", sans-serif; text-align: center; letter-spacing: 0; margin-bottom: 2px; }
.ae { color: #b887e6; background: #1f0740; } .ai { color: #e87a0c; background: #2b1500; } .ps { color: #8ec8ff; background: #06114d; }
.cmd { font: 6px "Liberation Mono", monospace; fill: #fff; }
.wp { font: 700 9px "Liberation Serif", serif; fill: #f08020; }
.tray { margin-left: auto; display: flex; align-items: center; color: #fff; padding-right: 25px; margin-right: 5px; border-right: 1px solid #777; }
.wifi { margin-left: 15px; } .bat { margin-left: 11px; } .vol { margin-left: 10px; }
.tray time { font: 15px "Open Sans", sans-serif; letter-spacing: -.6px; margin-left: 11px; width: 37px; white-space: nowrap; }
.note { margin-left: 22px; }
```
